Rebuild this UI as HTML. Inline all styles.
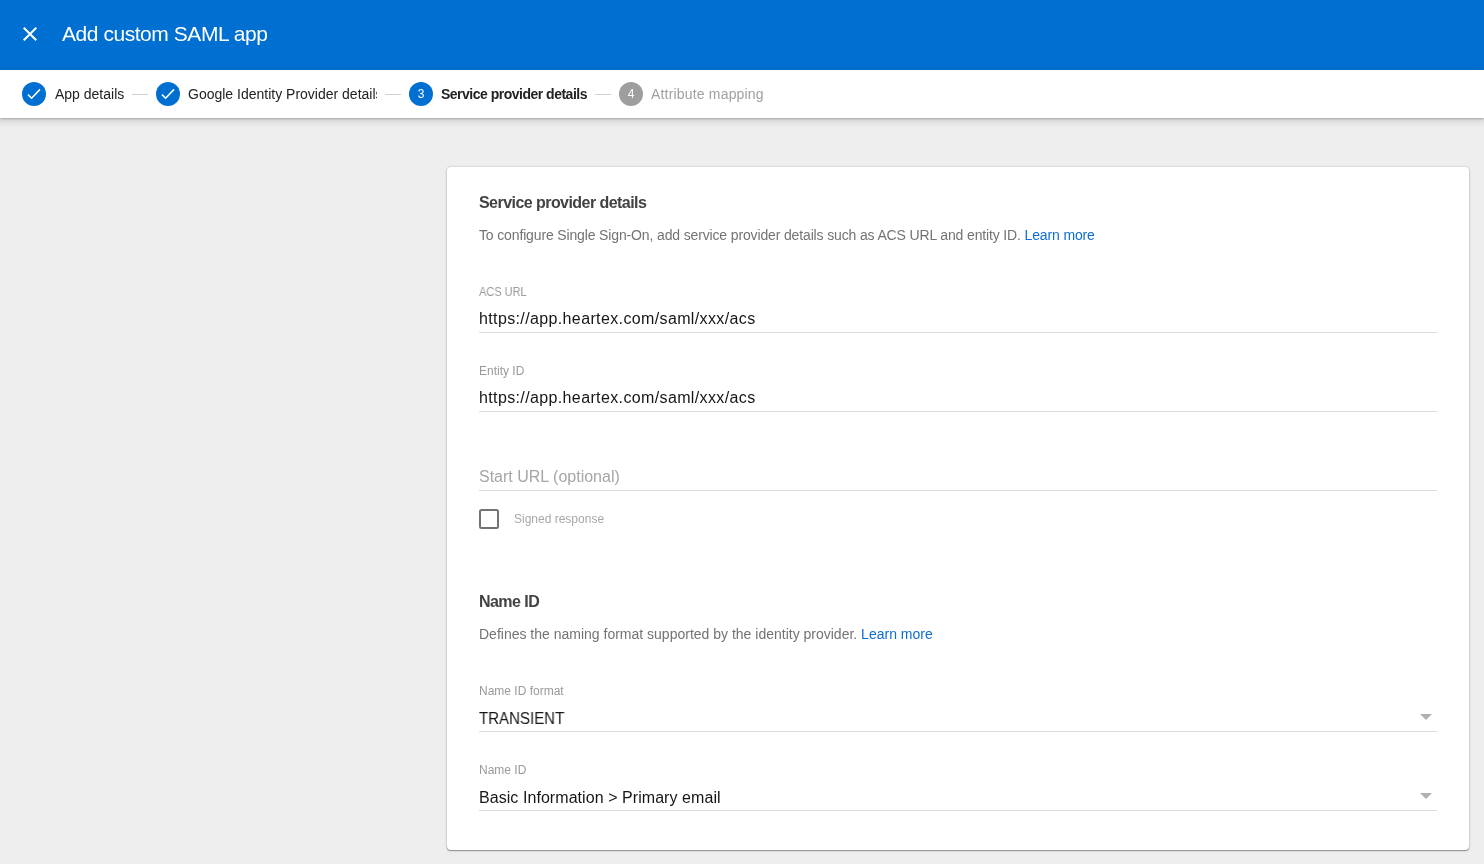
<!DOCTYPE html>
<html>
<head>
<meta charset="utf-8">
<style>
html,body{margin:0;padding:0;}
body{width:1484px;height:864px;overflow:hidden;background:#eeeeee;font-family:"Liberation Sans",sans-serif;position:relative;}
.a{position:absolute;white-space:nowrap;will-change:transform;}
#hdr{left:0;top:0;width:1484px;height:70px;background:#006fd2;}
#title{left:62px;top:22.6px;font-size:21px;line-height:21px;color:#fff;letter-spacing:-0.45px;}
#steps{left:0;top:70px;width:1484px;height:48px;background:#fff;box-shadow:0 1px 2px 0 rgba(60,64,67,.3),0 2px 6px 2px rgba(60,64,67,.15);}
.circ{width:24px;height:24px;border-radius:50%;background:#006fd2;top:82px;}
.circ.g{background:#9e9e9e;}
.num{font-size:12px;line-height:24px;color:#fff;text-align:center;width:24px;top:82px;}
.slab{top:87px;font-size:14px;line-height:14px;color:#222;}
.sline{top:94px;height:1px;width:16px;background:#d0d0d0;}
#card{left:447px;top:167px;width:1022px;height:683px;background:#fff;border-radius:4px;box-shadow:0 1.5px 1px -0.5px rgba(0,0,0,.3),0 0 2px 0 rgba(60,64,67,.3),0 1px 3px 0 rgba(60,64,67,.12);}
.h{font-size:16px;line-height:16px;font-weight:bold;color:#424242;letter-spacing:-0.55px;}
.d{font-size:14px;line-height:14px;color:#737373;}
.lnk{color:#0d6dd4;}
.lbl{font-size:12px;line-height:12px;color:#9a9a9a;}
.val{font-size:16px;line-height:16px;color:#161616;}
.url{letter-spacing:0.37px;}
.ph{font-size:16px;line-height:16px;color:#a6a6a6;}
.ul{left:479px;width:958px;height:1px;background:#dcdcdc;}
.arr{width:0;height:0;border-left:6px solid transparent;border-right:6px solid transparent;border-top:6px solid #b0b0b0;}
</style>
</head>
<body>
<div id="hdr" class="a"></div>
<svg class="a" style="left:18px;top:22px" width="24" height="24" viewBox="0 0 24 24"><path d="M19 6.41L17.59 5 12 10.59 6.41 5 5 6.41 10.59 12 5 17.59 6.41 19 12 13.41 17.59 19 19 17.59 13.41 12z" fill="#fff"/></svg>
<div id="title" class="a">Add custom SAML app</div>

<div id="steps" class="a"></div>
<div class="a circ" style="left:22px"></div>
<svg class="a" style="left:22px;top:82px" width="24" height="24" viewBox="0 0 24 24"><path d="M6 12.6L9.6 16.2L18 7.4" fill="none" stroke="#fff" stroke-width="1.55"/></svg>
<div class="a slab" style="left:55px">App details</div>
<div class="a sline" style="left:132px"></div>
<div class="a circ" style="left:156px"></div>
<svg class="a" style="left:156px;top:82px" width="24" height="24" viewBox="0 0 24 24"><path d="M6 12.6L9.6 16.2L18 7.4" fill="none" stroke="#fff" stroke-width="1.55"/></svg>
<div class="a slab" style="left:188px;width:189px;overflow:hidden;line-height:20px;top:84px">Google Identity Provider details</div>
<div class="a sline" style="left:385px"></div>
<div class="a circ" style="left:409px"></div>
<div class="a num" style="left:409px">3</div>
<div class="a slab" style="left:441px;font-weight:bold;letter-spacing:-0.5px">Service provider details</div>
<div class="a sline" style="left:595px"></div>
<div class="a circ g" style="left:619px"></div>
<div class="a num" style="left:619px">4</div>
<div class="a slab" style="left:651px;color:#a0a0a0;letter-spacing:0.18px">Attribute mapping</div>

<div id="card" class="a"></div>
<div class="a h" style="left:479px;top:194.5px">Service provider details</div>
<div class="a d" style="left:479px;top:228px;letter-spacing:-0.142px">To configure Single Sign-On, add service provider details such as ACS URL and entity ID. <span class="lnk">Learn more</span></div>

<div class="a lbl" style="left:479px;top:286px;transform:scaleX(0.915);transform-origin:0 0">ACS URL</div>
<div class="a val url" style="left:479px;top:310.5px">https://app.heartex.com/saml/xxx/acs</div>
<div class="a ul" style="top:332px"></div>

<div class="a lbl" style="left:479px;top:365px">Entity ID</div>
<div class="a val url" style="left:479px;top:389.5px">https://app.heartex.com/saml/xxx/acs</div>
<div class="a ul" style="top:411px"></div>

<div class="a ph" style="left:479px;top:468.5px">Start URL (optional)</div>
<div class="a ul" style="top:490px"></div>

<div class="a" style="left:479.2px;top:509.3px;width:15.6px;height:15.6px;border:2px solid #737373;border-radius:2.5px"></div>
<div class="a lbl" style="left:514px;top:513px;color:#a8a8a8">Signed response</div>

<div class="a h" style="left:479px;top:593.5px">Name ID</div>
<div class="a d" style="left:479px;top:627px">Defines the naming format supported by the identity provider. <span class="lnk">Learn more</span></div>

<div class="a lbl" style="left:479px;top:685px">Name ID format</div>
<div class="a val" style="left:479px;top:710.5px;transform:scaleX(0.94);transform-origin:0 0">TRANSIENT</div>
<div class="a arr" style="left:1420px;top:714px"></div>
<div class="a ul" style="top:731px"></div>

<div class="a lbl" style="left:479px;top:764px">Name ID</div>
<div class="a val" style="left:479px;top:789.5px;letter-spacing:0.06px">Basic Information &gt; Primary email</div>
<div class="a arr" style="left:1420px;top:793px"></div>
<div class="a ul" style="top:810px"></div>
</body>
</html>
